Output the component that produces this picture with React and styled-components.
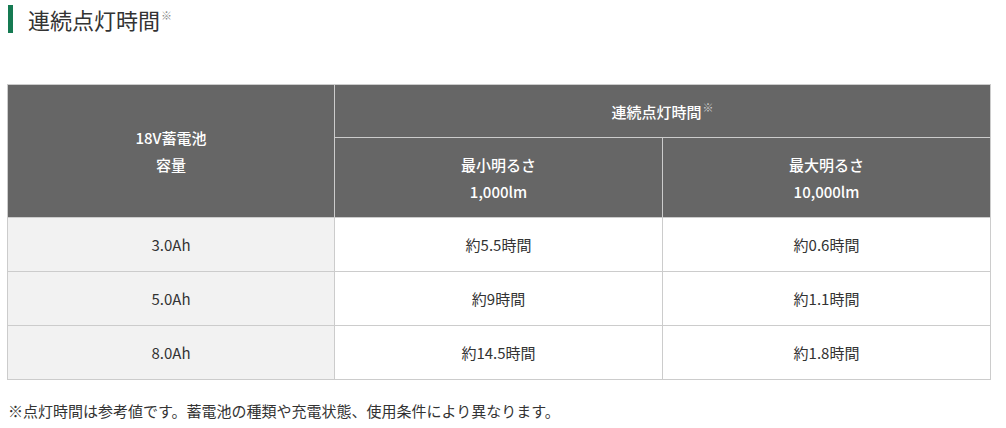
import React from 'react';
import styled, { createGlobalStyle } from 'styled-components';

const GlobalStyle = createGlobalStyle`
  html, body {
    margin: 0;
    padding: 0;
    background: #fff;
  }
  body {
    font-family: "Noto Sans CJK JP", "Noto Sans", sans-serif;
    color: #333;
  }
`;

const Page = styled.div`
  width: 1006px;
  padding: 5px 0 0 7px;
  box-sizing: border-box;
`;

const Heading = styled.h2`
  margin: 0 0 0 1px;
  padding-left: 15px;
  border-left: 5px solid #157a52;
  font-size: 22px;
  font-weight: 400;
  line-height: 28px;
  color: #333;
`;

const Sup = styled.sup`
  font-size: 11px;
  color: ${(p) => (p.$light ? '#ccc' : '#888')};
  vertical-align: top;
  position: relative;
  top: -4px;
  margin-left: 1px;
  font-weight: 400;
`;

const Table = styled.table`
  margin-top: 51px;
  width: 983px;
  border-collapse: collapse;
  table-layout: fixed;
  font-size: 15px;
`;

const Th = styled.th`
  background: #666;
  color: #fff;
  font-weight: 500;
  border: 1px solid #ccc;
  text-align: center;
  vertical-align: middle;
  line-height: 27px;
  height: ${(p) => p.$h}px;
  padding: 0;
`;

const Td = styled.td`
  background: ${(p) => (p.$label ? '#f2f2f2' : '#fff')};
  border: 1px solid #ccc;
  text-align: center;
  height: 53px;
  padding: 0;
  color: #333;
`;

const Note = styled.p`
  margin: 20px 0 0 1px;
  font-size: 15px;
  color: #333;
`;

const rows = [
  ['3.0Ah', '約5.5時間', '約0.6時間'],
  ['5.0Ah', '約9時間', '約1.1時間'],
  ['8.0Ah', '約14.5時間', '約1.8時間'],
];

const App = () => (
  <Page>
    <GlobalStyle />
    <Heading>
      連続点灯時間<Sup>※</Sup>
    </Heading>
    <Table>
      <colgroup>
        <col style={{ width: 327 }} />
        <col style={{ width: 328 }} />
        <col style={{ width: 328 }} />
      </colgroup>
      <thead>
        <tr>
          <Th rowSpan={2}>
            18V蓄電池
            <br />
            容量
          </Th>
          <Th colSpan={2} $h={52}>
            連続点灯時間<Sup $light>※</Sup>
          </Th>
        </tr>
        <tr>
          <Th $h={79}>
            最小明るさ
            <br />
            1,000lm
          </Th>
          <Th $h={79}>
            最大明るさ
            <br />
            10,000lm
          </Th>
        </tr>
      </thead>
      <tbody>
        {rows.map((r) => (
          <tr key={r[0]}>
            <Td $label>{r[0]}</Td>
            <Td>{r[1]}</Td>
            <Td>{r[2]}</Td>
          </tr>
        ))}
      </tbody>
    </Table>
    <Note>※点灯時間は参考値です。蓄電池の種類や充電状態、使用条件により異なります。</Note>
  </Page>
);

export default App;
